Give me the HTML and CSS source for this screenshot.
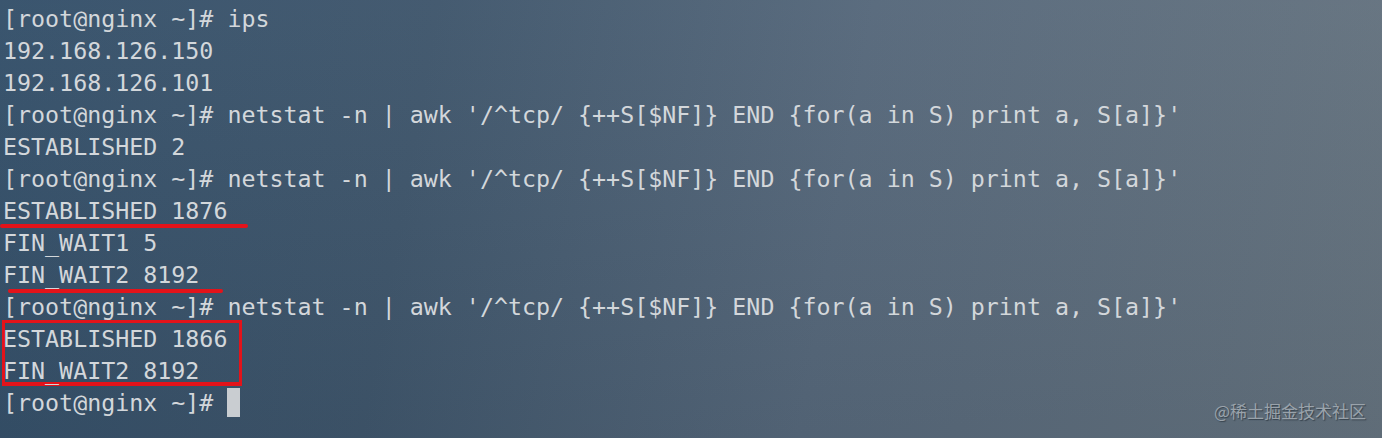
FILE: index.html
```html
<!DOCTYPE html>
<html>
<head>
<meta charset="utf-8">
<link rel="stylesheet" href="styles.css">
</head>
<body>
<div class="term">
  <div class="line">[root@nginx ~]# ips</div>
  <div class="line">192.168.126.150</div>
  <div class="line">192.168.126.101</div>
  <div class="line">[root@nginx ~]# netstat -n | awk '/^tcp/ {++S[$NF]} END {for(a in S) print a, S[a]}'</div>
  <div class="line">ESTABLISHED 2</div>
  <div class="line">[root@nginx ~]# netstat -n | awk '/^tcp/ {++S[$NF]} END {for(a in S) print a, S[a]}'</div>
  <div class="line mark mark-a">ESTABLISHED 1876</div>
  <div class="line">FIN_WAIT1 5</div>
  <div class="line mark mark-b">FIN_WAIT2 8192</div>
  <div class="line">[root@nginx ~]# netstat -n | awk '/^tcp/ {++S[$NF]} END {for(a in S) print a, S[a]}'</div>
  <div class="boxed">
    <div class="line">ESTABLISHED 1866</div>
    <div class="line">FIN_WAIT2 8192</div>
  </div>
  <div class="line">[root@nginx ~]# <span class="cursor"></span></div>
</div>
<div class="watermark">@稀土掘金技术社区</div>
</body>
</html>
```
FILE: styles.css
```css
html, body {
  margin: 0;
  padding: 0;
  width: 1382px;
  height: 438px;
  overflow: hidden;
}
body {
  position: relative;
  background: linear-gradient(100deg, #34506a 0%, #3f566c 30%, #56687b 60%, #65737f 100%);
}
body::before {
  content: "";
  position: absolute;
  inset: 0;
  background: linear-gradient(180deg, rgba(255,255,255,0.03) 0%, rgba(0,0,0,0.06) 100%);
  pointer-events: none;
}
.term {
  position: relative;
  padding: 3px 0 0 3px;
  font-family: "DejaVu Sans Mono", monospace;
  font-size: 23.3px;
  line-height: 32px;
  color: #d3d7db;
}
.line {
  height: 32px;
  position: relative;
  white-space: pre;
}
.mark::after {
  content: "";
  position: absolute;
  height: 4px;
  border-radius: 2px;
  background: #e3131a;
}
.mark-a::after {
  left: -3px;
  width: 248px;
  top: 29px;
}
.mark-b::after {
  left: 5px;
  width: 215px;
  top: 30px;
}
.boxed {
  position: relative;
}
.boxed .line {
  z-index: 1;
}
.boxed::after {
  content: "";
  position: absolute;
  z-index: 0;
  left: -1px;
  top: -3px;
  width: 234px;
  height: 59px;
  border: 3px solid #e3131a;
  border-bottom-width: 4px;
}
.cursor {
  display: inline-block;
  width: 13px;
  height: 29px;
  background: #c9cdd1;
  vertical-align: -6px;
}
.watermark {
  position: absolute;
  right: 16px;
  bottom: 17px;
  font-family: "Noto Sans CJK SC", "Noto Sans", sans-serif;
  font-size: 17px;
  line-height: 20px;
  color: #9aa3ab;
  text-shadow: 1px 1px 1px rgba(30,40,50,0.6);
}
```
